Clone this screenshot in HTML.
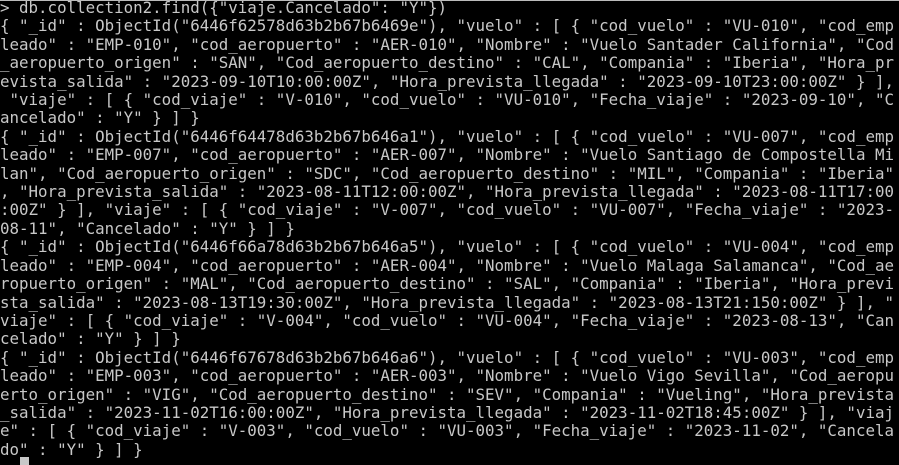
<!DOCTYPE html>
<html><head><meta charset="utf-8"><style>
html,body{margin:0;padding:0;background:#000;width:899px;height:465px;overflow:hidden}
body{border-top:1px solid #bbb;box-sizing:border-box;position:relative}
.t{position:absolute;left:0;top:-2px;font-family:"DejaVu Sans Mono","Liberation Mono",monospace;font-size:15.8px;line-height:18.4px;color:#c8c8c8;width:94ch;white-space:break-spaces;word-break:break-all;line-break:anywhere}
.t div{margin:0}
.cur{position:absolute;left:20px;top:456px;width:9px;height:10px;background:#c8c8c8}
</style></head><body>
<div class="t"><div>&gt; db.collection2.find({"viaje.Cancelado": "Y"})</div><div>{ "_id" : ObjectId("6446f62578d63b2b67b6469e"), "vuelo" : [ { "cod_vuelo" : "VU-010", "cod_empleado" : "EMP-010", "cod_aeropuerto" : "AER-010", "Nombre" : "Vuelo Santader California", "Cod_aeropuerto_origen" : "SAN", "Cod_aeropuerto_destino" : "CAL", "Compania" : "Iberia", "Hora_prevista_salida" : "2023-09-10T10:00:00Z", "Hora_prevista_llegada" : "2023-09-10T23:00:00Z" } ], "viaje" : [ { "cod_viaje" : "V-010", "cod_vuelo" : "VU-010", "Fecha_viaje" : "2023-09-10", "Cancelado" : "Y" } ] }</div><div>{ "_id" : ObjectId("6446f64478d63b2b67b646a1"), "vuelo" : [ { "cod_vuelo" : "VU-007", "cod_empleado" : "EMP-007", "cod_aeropuerto" : "AER-007", "Nombre" : "Vuelo Santiago de Compostella Milan", "Cod_aeropuerto_origen" : "SDC", "Cod_aeropuerto_destino" : "MIL", "Compania" : "Iberia", "Hora_prevista_salida" : "2023-08-11T12:00:00Z", "Hora_prevista_llegada" : "2023-08-11T17:00:00Z" } ], "viaje" : [ { "cod_viaje" : "V-007", "cod_vuelo" : "VU-007", "Fecha_viaje" : "2023-08-11", "Cancelado" : "Y" } ] }</div><div>{ "_id" : ObjectId("6446f66a78d63b2b67b646a5"), "vuelo" : [ { "cod_vuelo" : "VU-004", "cod_empleado" : "EMP-004", "cod_aeropuerto" : "AER-004", "Nombre" : "Vuelo Malaga Salamanca", "Cod_aeropuerto_origen" : "MAL", "Cod_aeropuerto_destino" : "SAL", "Compania" : "Iberia", "Hora_prevista_salida" : "2023-08-13T19:30:00Z", "Hora_prevista_llegada" : "2023-08-13T21:150:00Z" } ], "viaje" : [ { "cod_viaje" : "V-004", "cod_vuelo" : "VU-004", "Fecha_viaje" : "2023-08-13", "Cancelado" : "Y" } ] }</div><div>{ "_id" : ObjectId("6446f67678d63b2b67b646a6"), "vuelo" : [ { "cod_vuelo" : "VU-003", "cod_empleado" : "EMP-003", "cod_aeropuerto" : "AER-003", "Nombre" : "Vuelo Vigo Sevilla", "Cod_aeropuerto_origen" : "VIG", "Cod_aeropuerto_destino" : "SEV", "Compania" : "Vueling", "Hora_prevista_salida" : "2023-11-02T16:00:00Z", "Hora_prevista_llegada" : "2023-11-02T18:45:00Z" } ], "viaje" : [ { "cod_viaje" : "V-003", "cod_vuelo" : "VU-003", "Fecha_viaje" : "2023-11-02", "Cancelado" : "Y" } ] }</div></div>
<div class="cur"></div>
</body></html>
